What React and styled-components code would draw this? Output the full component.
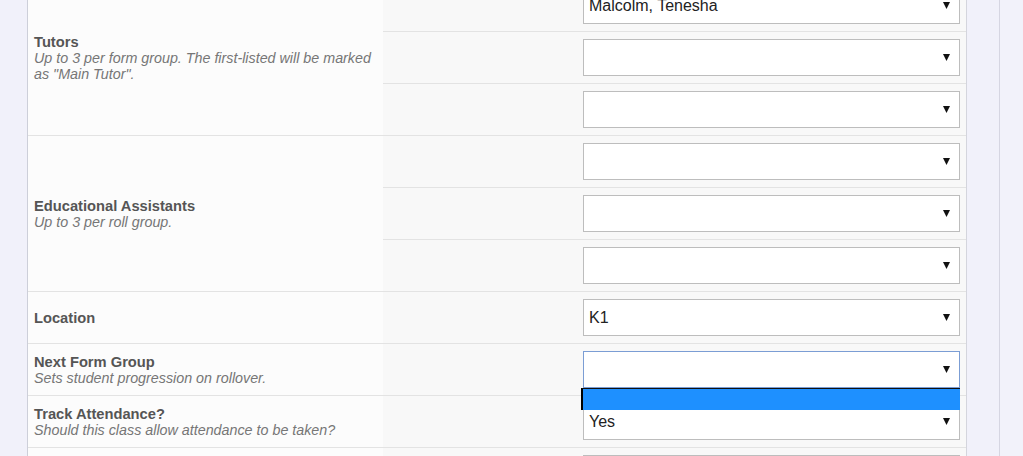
import React from 'react';
import styled, { createGlobalStyle } from 'styled-components';

const GlobalStyle = createGlobalStyle`
  html, body {
    margin: 0;
    padding: 0;
    background: #f1f1fa;
    font-family: "Liberation Sans", Arial, sans-serif;
  }
`

/* page frame */
const Page = styled.div`
  display: flex;
  height: 456px;
  overflow: hidden;
  background: #f1f1fa;
`
const Gutter = styled.div`
  width: 27px;
  flex: none;
`
const SideGap = styled.div`
  width: 32px;
  flex: none;
`
const SideRule = styled.div`
  flex: 1;
  border-left: 1px solid #d6d6e2;
  background: #f2f2fa;
`

/* form table, scrolled a little down */
const FormTable = styled.div`
  width: 940px;
  flex: none;
  box-sizing: border-box;
  margin-top: -20px;
  align-self: flex-start;
  border-left: 1px solid #cdcfd9;
  border-right: 1px solid #d4d5dd;
  display: grid;
  grid-template-columns: 355px 1fr;
  grid-auto-rows: 52px;
`
const LabelCell = styled.div`
  grid-row: span ${props => props.span || 1};
  background: #fcfcfc;
  border-bottom: 1px solid #e3e3e3;
  padding: 0 6px;
  display: flex;
  flex-direction: column;
  justify-content: center;
`
const Label = styled.div`
  font-size: 14.7px;
  font-weight: 700;
  color: #555;
  line-height: 16px;
`
const Description = styled.div`
  font-size: 14.3px;
  font-style: italic;
  color: #767676;
  line-height: 16px;
`
const ValueCell = styled.div`
  grid-column: 2;
  box-sizing: border-box;
  background: #f8f8f8;
  border-bottom: 1px solid #e3e3e3;
  display: flex;
  align-items: center;
  justify-content: flex-end;
  padding-right: 6px;
`
const Select = styled.div`
  position: relative;
  width: 377px;
  height: 37px;
  box-sizing: border-box;
  background: #fff;
  border: 1px solid ${props => props.focused ? '#7b9dd4' : '#bdbdbd'};
  display: flex;
  align-items: center;
  padding: 0 9px 0 5px;
  font-size: 16px;
  color: #222;
`
const SelectText = styled.span`
  flex: 1;
  white-space: nowrap;
`
const Popup = styled.div`
  position: absolute;
  z-index: 2;
  left: -3px;
  top: calc(100% + 1px);
  width: 379px;
  height: 22px;
  box-sizing: border-box;
  background: #1e90ff;
  border-left: 2px solid #000;
  border-top: 1px solid #111;
`

const Arrow = () => (
  <svg width="7" height="7" viewBox="0 0 7 7">
    <polygon points="0,0 7,0 3.5,7" fill="#111" />
  </svg>
)

const SelectBox = ({ value, focused, open }) => (
  <Select focused={focused}>
    <SelectText>{value}</SelectText>
    <Arrow />
    {open && <Popup />}
  </Select>
)

const groups = [
  {
    label: 'Tutors',
    desc: 'Up to 3 per form group. The first-listed will be marked as "Main Tutor".',
    selects: [{ value: 'Malcolm, Tenesha' }, { value: '' }, { value: '' }],
  },
  {
    label: 'Educational Assistants',
    desc: 'Up to 3 per roll group.',
    selects: [{ value: '' }, { value: '' }, { value: '' }],
  },
  { label: 'Location', selects: [{ value: 'K1' }] },
  {
    label: 'Next Form Group',
    desc: 'Sets student progression on rollover.',
    selects: [{ value: '', focused: true, open: true }],
  },
  {
    label: 'Track Attendance?',
    desc: 'Should this class allow attendance to be taken?',
    selects: [{ value: 'Yes' }],
  },
  { label: '', selects: [{ value: '' }] },
]

export default function App() {
  return (
    <>
      <GlobalStyle />
      <Page>
        <Gutter />
        <FormTable>
          {groups.map((g, gi) => (
            <React.Fragment key={gi}>
              <LabelCell span={g.selects.length}>
                {g.label && <Label>{g.label}</Label>}
                {g.desc && <Description>{g.desc}</Description>}
              </LabelCell>
              {g.selects.map((s, si) => (
                <ValueCell key={si}>
                  <SelectBox {...s} />
                </ValueCell>
              ))}
            </React.Fragment>
          ))}
        </FormTable>
        <SideGap />
        <SideRule />
      </Page>
    </>
  )
}
